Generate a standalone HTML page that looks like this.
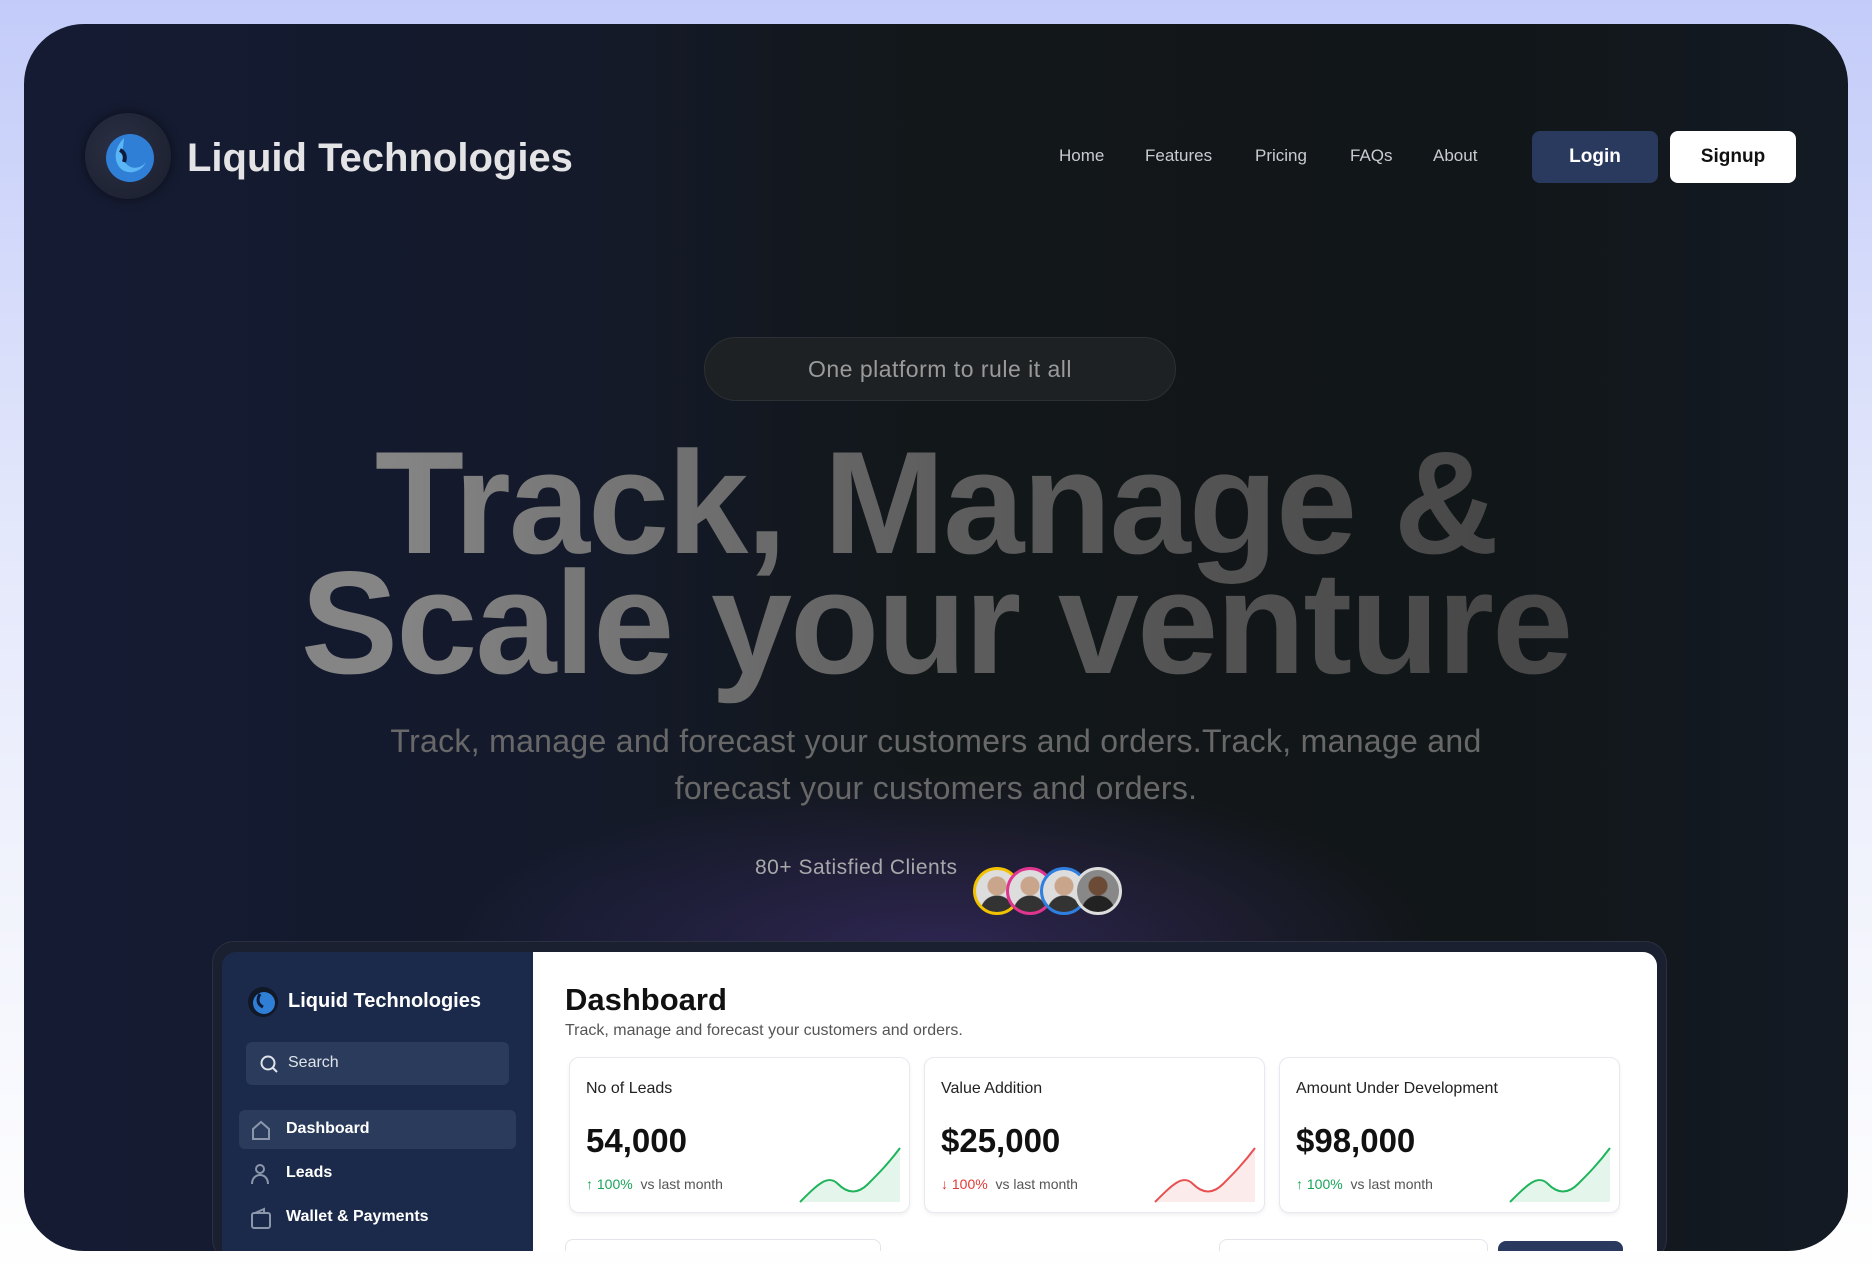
<!DOCTYPE html>
<html><head><meta charset="utf-8"><style>
*{margin:0;padding:0;box-sizing:border-box}
html,body{width:1872px;height:1276px;overflow:hidden}
body{font-family:"Liberation Sans",sans-serif;background:linear-gradient(180deg,#c3ccf9 0%,#e3e7fb 40%,#f6f7fd 80%,#fff 100%);position:relative}
.card{position:absolute;left:24px;top:24px;width:1824px;height:1227px;border-radius:60px;overflow:hidden;
background:radial-gradient(ellipse 700px 260px at 920px 930px,rgba(70,50,130,.55),transparent 70%),linear-gradient(90deg,#151b33 0%,#141a2a 30%,#121719 50%,#111618 80%,#131a24 100%)}
.abs{position:absolute}
.nav a{position:absolute;top:122px;color:#c9cbd0;font-size:17px;text-decoration:none}
.btn{position:absolute;top:107px;width:126px;height:52px;border-radius:8px;font-size:19px;font-weight:bold;display:flex;align-items:center;justify-content:center}
.h{position:absolute;left:0;width:1824px;text-align:center;font-weight:bold;font-size:146px;letter-spacing:-2px;line-height:122px;padding-bottom:40px;white-space:nowrap;
background:linear-gradient(90deg,#858585 20%,#5e5e5e 50%,#484848 80%);-webkit-background-clip:text;background-clip:text;color:transparent}
.av{position:absolute;top:843px;width:48px;height:48px;border-radius:50%;border:3px solid;background:radial-gradient(circle at 50% 38%,#c9a58c 0 9px,transparent 10px),radial-gradient(circle at 50% 100%,#333 0 16px,#ddd 17px)}
.sc{position:absolute;top:1033px;width:341px;height:156px;background:#fff;border:1px solid #e7e9ee;border-radius:10px;box-shadow:0 2px 4px rgba(0,0,0,.06)}
.sc .t{position:absolute;left:16px;top:22px;font-size:16px;color:#222}
.sc .v{position:absolute;left:16px;top:64px;font-size:33px;font-weight:bold;color:#111}
.sc .d{position:absolute;left:16px;top:118px;font-size:14px;color:#555}
.si{position:absolute;left:262px;font-size:16px;font-weight:bold;color:#fff}
</style></head><body>
<div class="card">
 <div class="abs" style="left:61px;top:89px;width:86px;height:86px;border-radius:50%;background:radial-gradient(circle at 40% 40%,#2a2f44,#1a1e2c);box-shadow:0 0 10px rgba(0,0,0,.5)"></div>
 <svg class="abs" style="left:76px;top:104px" width="56" height="56" viewBox="0 0 56 56"><circle cx="30" cy="30" r="24" fill="#2f7fd6"/><path d="M24 10c-8 8-12 20-4 30 8 8 22 4 26-6-6 8-18 8-22-2-3-8 0-16 0-22z" fill="#5bb6f5"/><path d="M20 22c4 2 6 6 4 12" stroke="#0d1a3a" stroke-width="4" fill="none"/></svg>
 <div class="abs" style="left:163px;top:112px;font-size:40px;font-weight:bold;color:#e4e4e6">Liquid Technologies</div>
 <div class="nav"><a style="left:1035px">Home</a><a style="left:1121px">Features</a><a style="left:1231px">Pricing</a><a style="left:1326px">FAQs</a><a style="left:1409px">About</a></div>
 <div class="btn" style="left:1508px;background:#2a3a5e;color:#fff">Login</div>
 <div class="btn" style="left:1646px;background:#fff;color:#111">Signup</div>
 <div class="abs" style="left:680px;top:313px;width:472px;height:64px;border-radius:32px;background:#1e2124;border:1px solid #2c2f33;color:#9a9a9a;font-size:23px;display:flex;align-items:center;justify-content:center;letter-spacing:.5px">One platform to rule it all</div>
 <div class="h" style="top:418px">Track, Manage &amp;</div>
 <div class="h" style="top:538px">Scale your venture</div>
 <div class="abs" style="left:0;width:1824px;top:694px;text-align:center;font-size:32px;line-height:47px;color:#686868;letter-spacing:.3px">Track, manage and forecast your customers and orders.Track, manage and<br>forecast your customers and orders.</div>
 <div class="abs" style="left:731px;top:832px;font-size:21px;color:#a8a8ab;letter-spacing:.5px">80+ Satisfied Clients</div>
 <div class="av" style="left:949px;border-color:#f2c200"></div>
 <div class="av" style="left:982px;border-color:#e0358e"></div>
 <div class="av" style="left:1016px;border-color:#2f7fe0"></div>
 <div class="av" style="left:1050px;border-color:#ddd;background:radial-gradient(circle at 50% 38%,#6b4a36 0 9px,transparent 10px),radial-gradient(circle at 50% 100%,#222 0 16px,#888 17px)"></div>
 <div class="abs" style="left:188px;top:917px;width:1455px;height:320px;border-radius:22px;background:#1a2030;border:1px solid #2a3040"></div>
 <div class="abs" style="left:198px;top:928px;width:311px;height:300px;background:#1b2a4a;border-top-left-radius:14px"></div>
 <div class="abs" style="left:509px;top:928px;width:1124px;height:300px;background:#fff;border-top-right-radius:14px"></div>
 <svg class="abs" style="left:223px;top:962px" width="32" height="32"><circle cx="16" cy="16" r="15" fill="#111827"/><circle cx="17" cy="17" r="11" fill="#2f7fd6"/><path d="M13 8c-3 5-3 10 3 13" stroke="#0d1a3a" stroke-width="3" fill="none"/></svg>
 <div class="abs" style="left:264px;top:966px;font-size:20px;font-weight:bold;color:#fff">Liquid Technologies</div>
 <div class="abs" style="left:222px;top:1018px;width:263px;height:43px;border-radius:6px;background:#2b3b5c"></div>
 <svg class="abs" style="left:236px;top:1031px" width="18" height="18"><circle cx="8" cy="8" r="6.5" stroke="#dfe3ea" stroke-width="2" fill="none"/><path d="M13 13l4 4" stroke="#dfe3ea" stroke-width="2"/></svg>
 <div class="abs" style="left:264px;top:1030px;font-size:16px;color:#dfe3ea">Search</div>
 <div class="abs" style="left:215px;top:1086px;width:277px;height:39px;border-radius:6px;background:#2b3b5c"></div>
 <svg class="abs" style="left:226px;top:1095px" width="22" height="22"><path d="M3 10l8-7 8 7v10H3z" stroke="#8b96ab" stroke-width="2" fill="none"/></svg>
 <div class="si" style="top:1096px">Dashboard</div>
 <svg class="abs" style="left:226px;top:1139px" width="22" height="22"><circle cx="10" cy="6" r="4" stroke="#8b96ab" stroke-width="2" fill="none"/><path d="M2 21c0-6 4-9 8-9s8 3 8 9" stroke="#8b96ab" stroke-width="2" fill="none"/></svg>
 <div class="si" style="top:1140px">Leads</div>
 <svg class="abs" style="left:226px;top:1183px" width="22" height="22"><rect x="2" y="6" width="18" height="15" rx="2" stroke="#8b96ab" stroke-width="2" fill="none"/><path d="M5 6l9-4v4" stroke="#8b96ab" stroke-width="2" fill="none"/></svg>
 <div class="si" style="top:1184px">Wallet &amp; Payments</div>
 <div class="abs" style="left:541px;top:958px;font-size:31px;font-weight:bold;color:#111">Dashboard</div>
 <div class="abs" style="left:541px;top:998px;font-size:16px;color:#555">Track, manage and forecast your customers and orders.</div>
 <div class="sc" style="left:545px"><div class="t">No of Leads</div><div class="v">54,000</div><div class="d"><span style="color:#1aa55a">↑ 100%</span>&nbsp; vs last month</div>
  <svg class="abs" style="left:228px;top:86px" width="104" height="60"><path d="M2 58C20 40 30 30 40 40S60 50 70 40 90 20 102 4L102 58z" fill="rgba(30,180,90,.12)"/><path d="M2 58C20 40 30 30 40 40S60 50 70 40 90 20 102 4" stroke="#1eb45a" stroke-width="2" fill="none"/></svg></div>
 <div class="sc" style="left:900px"><div class="t">Value Addition</div><div class="v">$25,000</div><div class="d"><span style="color:#e53935">↓ 100%</span>&nbsp; vs last month</div>
  <svg class="abs" style="left:228px;top:86px" width="104" height="60"><path d="M2 58C20 40 30 30 40 40S60 50 70 40 90 20 102 4L102 58z" fill="rgba(230,60,60,.1)"/><path d="M2 58C20 40 30 30 40 40S60 50 70 40 90 20 102 4" stroke="#e85050" stroke-width="2" fill="none"/></svg></div>
 <div class="sc" style="left:1255px"><div class="t">Amount Under Development</div><div class="v">$98,000</div><div class="d"><span style="color:#1aa55a">↑ 100%</span>&nbsp; vs last month</div>
  <svg class="abs" style="left:228px;top:86px" width="104" height="60"><path d="M2 58C20 40 30 30 40 40S60 50 70 40 90 20 102 4L102 58z" fill="rgba(30,180,90,.12)"/><path d="M2 58C20 40 30 30 40 40S60 50 70 40 90 20 102 4" stroke="#1eb45a" stroke-width="2" fill="none"/></svg></div>
 <div class="abs" style="left:541px;top:1215px;width:316px;height:40px;border:1px solid #e3e5ea;border-radius:8px"></div>
 <div class="abs" style="left:1195px;top:1215px;width:269px;height:40px;border:1px solid #e3e5ea;border-radius:8px"></div>
 <div class="abs" style="left:1474px;top:1217px;width:125px;height:40px;background:#2a3a5e;border-radius:8px"></div>
</div>
</body></html>
